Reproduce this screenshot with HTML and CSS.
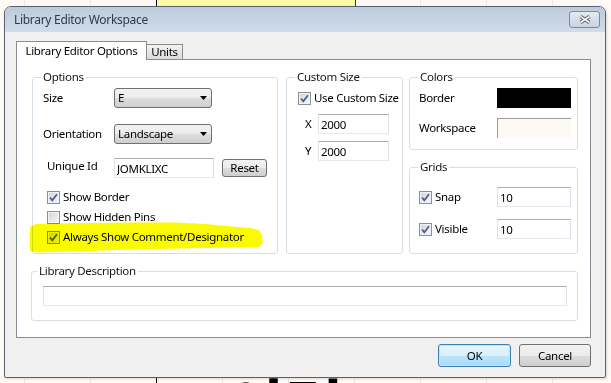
FILE: index.html
```html
<!DOCTYPE html>
<html>
<head>
    <meta charset="utf-8">
    <title>Library Editor Workspace</title>
    <link rel="stylesheet" href="styles.css">
</head>
<body>
    <div class="sheet"></div>
    <div class="sheet-edge"></div>
    <div class="sheet-text">이력</div>

    <div class="dialog">
        <div class="titlebar">
            <span class="title">Library Editor Workspace</span>
            <button class="close">
                <svg width="12" height="9" viewBox="0 0 12 9"><path class="x-out" d="M1.5 1.5L10.5 7.5M10.5 1.5L1.5 7.5"/><path class="x-in" d="M1.5 1.5L10.5 7.5M10.5 1.5L1.5 7.5"/></svg>
            </button>
        </div>

        <div class="client">
            <div class="tabs">
                <span class="tab active">Library Editor Options</span>
                <span class="tab">Units</span>
            </div>

            <div class="page">
                <div class="groups">
                    <fieldset class="group options">
                        <legend>Options</legend>
                        <div class="body">
                            <div class="row">
                                <span class="lbl">Size</span>
                                <div class="combo"><span>E</span><svg width="7" height="4"><path d="M0 0h7l-3.5 4z"/></svg></div>
                            </div>
                            <div class="row r2">
                                <span class="lbl">Orientation</span>
                                <div class="combo"><span>Landscape</span><svg width="7" height="4"><path d="M0 0h7l-3.5 4z"/></svg></div>
                            </div>
                            <div class="row r3">
                                <span class="lbl indent top">Unique Id</span>
                                <input class="field uid" type="text" value="JOMKLIXC">
                                <button class="btn reset">Reset</button>
                            </div>
                            <div class="row check first">
                                <span class="cb"><svg viewBox="0 0 11 11"><path d="M2 5.5L4.3 8.3L9 2.2"/></svg></span>
                                <span class="cb-text">Show Border</span>
                            </div>
                            <div class="row check">
                                <span class="cb"></span>
                                <span class="cb-text">Show Hidden Pins</span>
                            </div>
                            <div class="row check">
                                <span class="cb"><svg viewBox="0 0 11 11"><path d="M2 5.5L4.3 8.3L9 2.2"/></svg></span>
                                <span class="cb-text">Always Show Comment/Designator</span>
                            </div>
                        </div>
                    </fieldset>

                    <fieldset class="group custom">
                        <legend>Custom Size</legend>
                        <div class="body">
                            <div class="row">
                                <span class="cb"><svg viewBox="0 0 11 11"><path d="M2 5.5L4.3 8.3L9 2.2"/></svg></span>
                                <span class="cb-text">Use Custom Size</span>
                            </div>
                            <div class="row rx">
                                <span class="axis">X</span>
                                <input class="field size" type="text" value="2000">
                            </div>
                            <div class="row ry">
                                <span class="axis">Y</span>
                                <input class="field size" type="text" value="2000">
                            </div>
                        </div>
                    </fieldset>

                    <div class="column">
                        <fieldset class="group colors">
                            <legend>Colors</legend>
                            <div class="body">
                                <div class="row">
                                    <span class="grow">Border</span>
                                    <span class="swatch black"></span>
                                </div>
                                <div class="row r-ws">
                                    <span class="grow">Workspace</span>
                                    <span class="swatch paper"></span>
                                </div>
                            </div>
                        </fieldset>

                        <fieldset class="group grids">
                            <legend>Grids</legend>
                            <div class="body">
                                <div class="row">
                                    <span class="cb"><svg viewBox="0 0 11 11"><path d="M2 5.5L4.3 8.3L9 2.2"/></svg></span>
                                    <span class="cb-text grow">Snap</span>
                                    <input class="field grid" type="text" value="10">
                                </div>
                                <div class="row r-vis">
                                    <span class="cb"><svg viewBox="0 0 11 11"><path d="M2 5.5L4.3 8.3L9 2.2"/></svg></span>
                                    <span class="cb-text grow">Visible</span>
                                    <input class="field grid" type="text" value="10">
                                </div>
                            </div>
                        </fieldset>
                    </div>
                </div>

                <fieldset class="group desc">
                    <legend>Library Description</legend>
                    <div class="body">
                        <input class="field wide" type="text" value="">
                    </div>
                </fieldset>
            </div>

            <div class="buttons">
                <button class="btn ok">OK</button>
                <button class="btn cancel">Cancel</button>
            </div>
        </div>
    </div>

    <!-- marker stroke over the last checkbox -->
    <svg class="marker" width="611" height="383" viewBox="0 0 611 383">
        <path d="M30 227L36 224L52 223.5L90 223L140 222.5L175 222.5L205 224L232 226.5L250 228L259 230L262 235L262.5 243L259 247L230 247.5L180 248.5L130 249.5L90 251L55 252L38 252.5L30 251Z"/>
    </svg>
</body>
</html>
```

FILE: styles.css
```css
* { box-sizing: border-box; }

body {
    margin: 0;
    width: 611px;
    height: 383px;
    overflow: hidden;
    position: relative;
    font-family: "Noto Sans", "Liberation Sans", sans-serif;
    font-size: 11.5px;
    letter-spacing: -0.3px;
    line-height: 16px;
    color: #000;
    background-color: #fffaf5;
    background-image: repeating-linear-gradient(90deg, transparent 0, transparent 24px, #efe8e0 24px, #efe8e0 25px, transparent 25px, transparent 66px);
}

/* drawing sheet behind the dialog */
.sheet {
    position: absolute;
    left: 156px;
    top: -10px;
    width: 200px;
    height: 20px;
    background: #fff9a8;
    border-left: 1px solid #000;
    border-right: 1px solid #7a1616;
}
.sheet-edge {
    position: absolute;
    left: 156px;
    top: 370px;
    height: 20px;
    border-left: 1px solid #000;
}
.sheet-text {
    position: absolute;
    left: 226px;
    top: 372px;
    font-family: "Noto Sans CJK KR", sans-serif;
    font-weight: bold;
    font-size: 64px;
    line-height: 64px;
    letter-spacing: 0;
    color: #000;
}

/* window */
.dialog {
    position: absolute;
    left: 4px;
    top: 6px;
    width: 602px;
    height: 372px;
    border: 1px solid #59636f;
    border-radius: 7px 7px 2px 2px;
    background: #f0f0f0;
    display: flex;
    flex-direction: column;
    overflow: hidden;
    box-shadow: 1px 1px 3px rgba(0, 0, 0, 0.15);
}

.titlebar {
    flex: none;
    height: 25px;
    display: flex;
    align-items: center;
    padding: 0 5px 0 9px;
    background: linear-gradient(#bccbdc, #d1dce9);
}
.title {
    flex: 1;
    font-size: 12px;
    color: #2e3a47;
}
.close {
    width: 31px;
    height: 17px;
    padding: 0;
    border: 1px solid #7b899b;
    border-radius: 3px;
    background: linear-gradient(#e3eaf2, #c8d4e1);
    display: flex;
    align-items: center;
    justify-content: center;
}
.close svg { display: block; }
.x-out { stroke: #4e5966; stroke-width: 3.4; fill: none; }
.x-in { stroke: #fff; stroke-width: 1.6; fill: none; }

.client {
    flex: 1;
    display: flex;
    flex-direction: column;
    padding: 9px 14px 0 11px;
}

/* tabs */
.tabs {
    display: flex;
    align-items: flex-end;
    height: 18px;
    position: relative;
    z-index: 1;
}
.tab {
    height: 15px;
    width: 36px;
    border: 1px solid #898c95;
    border-left: none;
    border-bottom: none;
    background: linear-gradient(#f3f3f3, #dadada);
    line-height: 14px;
    text-align: center;
}
.tab.active {
    height: 19px;
    width: 131px;
    margin-bottom: -1px;
    border-left: 1px solid #898c95;
    background: #fff;
    line-height: 17px;
}

.page {
    height: 279px;
    border: 1px solid #898c95;
    background: #fff;
    padding: 9px 12px 0 14px;
}

.groups {
    display: flex;
    height: 185px;
    margin-left: 1px;
}

/* group boxes */
.group {
    margin: 0;
    padding: 0;
    min-width: 0;
    border: 1px solid #d5dfe5;
    border-radius: 3px;
}
.group legend {
    margin-left: 8px;
    padding: 0 2px;
    line-height: 16px;
    color: #151515;
}

.options { width: 246px; margin-right: 8px; }
.options .body { padding: 3px 0 0 10px; }

.custom { width: 117px; margin-right: 6px; }
.custom .body { padding: 3px 0 0 11px; }

.column { width: 169px; display: flex; flex-direction: column; }
.colors { height: 81px; }
.colors .body { padding: 3px 6px 0 9px; }
.grids { height: 95px; margin-top: 9px; }
.grids .body { padding: 12px 6px 0 9px; }

.desc { margin-top: 9px; }
.desc legend { margin-left: 5px; }
.desc .body { padding: 7px 10px 14px 11px; }

/* rows */
.row {
    display: flex;
    align-items: center;
    height: 20px;
    white-space: nowrap;
}
.r2 { margin-top: 16px; }
.r3 { margin-top: 14px; }
.check { padding-left: 4px; }
.check.first { margin-top: 9px; }
.rx { margin-top: 6px; }
.ry { margin-top: 7px; }
.r-ws { margin-top: 10px; }
.r-vis { margin-top: 12px; }

.lbl { width: 71px; flex: none; }
.lbl.indent { padding-left: 4px; }
.lbl.top { align-self: flex-start; }
.axis { width: 20px; padding-left: 7px; flex: none; }
.grow { flex: 1; }

/* controls */
.combo {
    width: 98px;
    height: 20px;
    display: flex;
    align-items: center;
    justify-content: space-between;
    padding: 0 4px 0 3px;
    border: 1px solid #707070;
    border-radius: 3px;
    background: linear-gradient(#f2f2f2 0, #ebebeb 50%, #dddddd 50%, #cfcfcf 100%);
}
.combo svg { display: block; }
.combo path { fill: #000; }

.field {
    height: 20px;
    margin: 0;
    padding: 0 2px;
    border: 1px solid;
    border-color: #abadb3 #dbdfe6 #e3e9ef #e2e3ea;
    border-radius: 0;
    background: #fff;
    font: inherit;
    letter-spacing: inherit;
    color: #000;
    outline: none;
}
.uid { width: 100px; }
.size { width: 71px; }
.grid { width: 74px; }
.wide { width: 100%; display: block; }

.btn {
    margin: 0;
    padding: 0;
    border: 1px solid #707070;
    border-radius: 3px;
    background: linear-gradient(#f2f2f2 0, #ebebeb 50%, #dddddd 50%, #cfcfcf 100%);
    font: inherit;
    letter-spacing: inherit;
    color: #000;
}
.reset {
    width: 45px;
    height: 18px;
    margin-left: 8px;
    line-height: 14px;
}

.cb {
    width: 13px;
    height: 13px;
    flex: none;
    border: 1px solid #8e8f8f;
    background: linear-gradient(135deg, #d0d3d8, #f7f7f7);
    box-shadow: inset 0 0 0 1px #f2f2f2;
}
.cb svg { display: block; width: 11px; height: 11px; }
.cb path { fill: none; stroke: #4a5d8e; stroke-width: 1.7; }
.cb-text { margin-left: 3px; }

.swatch { width: 74px; height: 20px; flex: none; }
.swatch.black { background: #000; }
.swatch.paper {
    background: #fdf9f4;
    border-top: 1px solid #9c9c9c;
    border-left: 1px solid #9c9c9c;
}

.buttons {
    display: flex;
    justify-content: flex-end;
    gap: 8px;
    margin-top: 6px;
}
.ok, .cancel { height: 23px; }
.ok {
    width: 73px;
    border-color: #3c7fb1;
    background: linear-gradient(#eaf6fd 0, #d9f0fc 50%, #bee6fd 50%, #a7d9f5 100%);
    box-shadow: inset 0 0 0 1px #c4e5f6;
}
.cancel { width: 72px; }

/* highlighter stroke */
.marker {
    position: absolute;
    left: 0;
    top: 0;
    pointer-events: none;
    mix-blend-mode: multiply;
    z-index: 5;
}
.marker path { fill: #fbfb00; }
```
